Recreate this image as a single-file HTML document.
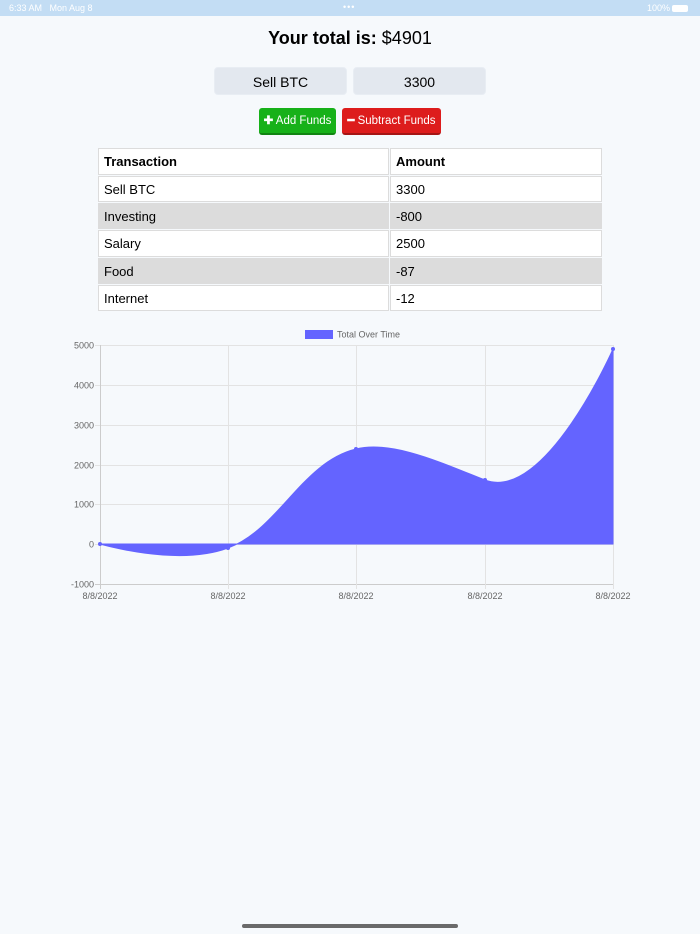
<!DOCTYPE html>
<html><head><meta charset="utf-8"><style>
*{margin:0;padding:0;box-sizing:border-box}
body{width:700px;height:934px;background:#f6f9fc;font-family:"Liberation Sans",Arial,sans-serif;position:relative;overflow:hidden;color:#000}
.a{position:absolute}
.sb{top:0;left:0;width:700px;height:16px;background:#c3ddf4;color:#fff;font-size:9px}
h1{position:absolute;top:28px;width:700px;text-align:center;font-size:18px;font-weight:bold}
h1 span{font-weight:normal}
.in{top:67px;height:28px;width:133px;background:#e3e8ef;border-radius:4px;font-size:14px;text-align:center;line-height:28px;border:1px solid #e8edf3}
.btn{top:108px;height:27px;border-radius:3px;color:#fff;font-size:11.5px;line-height:26px;text-align:center;border-bottom:2px solid rgba(0,0,0,.25)}
.c{border:1px solid #dcdcdc;background:#fff;font-size:13px;padding-left:5px;line-height:25px}
.g{background:#dcdcdc}
</style></head><body>
<div class="a sb"><span class="a" style="left:9px;top:3px">6:33 AM&nbsp;&nbsp;&nbsp;Mon Aug 8</span><span class="a" style="left:343px;top:2px;letter-spacing:1px">•••</span><span class="a" style="left:647px;top:3px">100%</span><span class="a" style="left:672px;top:5px;width:16px;height:7px;background:#fff;border-radius:2px"></span></div>
<h1>Your total is: <span>$4901</span></h1>
<div class="a in" style="left:214px">Sell BTC</div>
<div class="a in" style="left:353px">3300</div>
<div class="a btn" style="left:259px;width:77px;background:#17b119"><b>✚</b> Add Funds</div>
<div class="a btn" style="left:342px;width:99px;background:#dd1c1c"><b>━</b> Subtract Funds</div>
<div class="a c" style="left:98px;top:148px;width:291px;height:27px;font-weight:bold">Transaction</div>
<div class="a c" style="left:390px;top:148px;width:212px;height:27px;font-weight:bold">Amount</div>
<div class="a c" style="left:98px;top:176px;width:291px;height:26px">Sell BTC</div>
<div class="a c" style="left:390px;top:176px;width:212px;height:26px">3300</div>
<div class="a c g" style="left:98px;top:203px;width:291px;height:26px">Investing</div>
<div class="a c g" style="left:390px;top:203px;width:212px;height:26px">-800</div>
<div class="a c" style="left:98px;top:230px;width:291px;height:27px">Salary</div>
<div class="a c" style="left:390px;top:230px;width:212px;height:27px">2500</div>
<div class="a c g" style="left:98px;top:258px;width:291px;height:26px">Food</div>
<div class="a c g" style="left:390px;top:258px;width:212px;height:26px">-87</div>
<div class="a c" style="left:98px;top:285px;width:291px;height:26px">Internet</div>
<div class="a c" style="left:390px;top:285px;width:212px;height:26px">-12</div>
<svg class="a" style="left:0;top:320px" width="700" height="290" viewBox="0 320 700 290" font-family="Liberation Sans, Arial, sans-serif" font-size="9" fill="#666">
<g stroke="#e3e3e3" stroke-width="1">
<line x1="95" y1="345.5" x2="613" y2="345.5"/><line x1="95" y1="385.5" x2="613" y2="385.5"/><line x1="95" y1="425.5" x2="613" y2="425.5"/><line x1="95" y1="465.5" x2="613" y2="465.5"/><line x1="95" y1="504.5" x2="613" y2="504.5"/><line x1="95" y1="544.5" x2="613" y2="544.5"/><line x1="95" y1="584.5" x2="613" y2="584.5" stroke="#ccc"/>
<line x1="100.5" y1="345" x2="100.5" y2="589" stroke="#ccc"/><line x1="228.5" y1="345" x2="228.5" y2="589"/><line x1="356.5" y1="345" x2="356.5" y2="589"/><line x1="485.5" y1="345" x2="485.5" y2="589"/><line x1="613.5" y1="345" x2="613.5" y2="589"/>
</g>
<path d="M100,544 C100,544 177,567 228,548 C279,529 302,462 356,449 C392,440 442,463 485,480 C545,503 613,349 613,349 L613,544 L100,544 Z" fill="#6464ff" stroke="#6464ff" stroke-width="1"/>
<g fill="#6464ff"><circle cx="100" cy="544" r="2"/><circle cx="228" cy="548" r="2"/><circle cx="356" cy="449" r="2"/><circle cx="485" cy="480" r="2"/><circle cx="613" cy="349" r="2"/></g>
<rect x="305" y="330" width="28" height="9" fill="#6464ff"/>
<text x="337" y="337.5">Total Over Time</text>
<g text-anchor="end"><text x="94" y="348.5">5000</text><text x="94" y="388.5">4000</text><text x="94" y="428.5">3000</text><text x="94" y="468.5">2000</text><text x="94" y="507.5">1000</text><text x="94" y="547.5">0</text><text x="94" y="587.5">-1000</text></g>
<g text-anchor="middle"><text x="100" y="599">8/8/2022</text><text x="228" y="599">8/8/2022</text><text x="356" y="599">8/8/2022</text><text x="485" y="599">8/8/2022</text><text x="613" y="599">8/8/2022</text></g>
</svg>
<div class="a" style="left:242px;top:924px;width:216px;height:4px;border-radius:2px;background:#6a6a6a"></div>
</body></html>
